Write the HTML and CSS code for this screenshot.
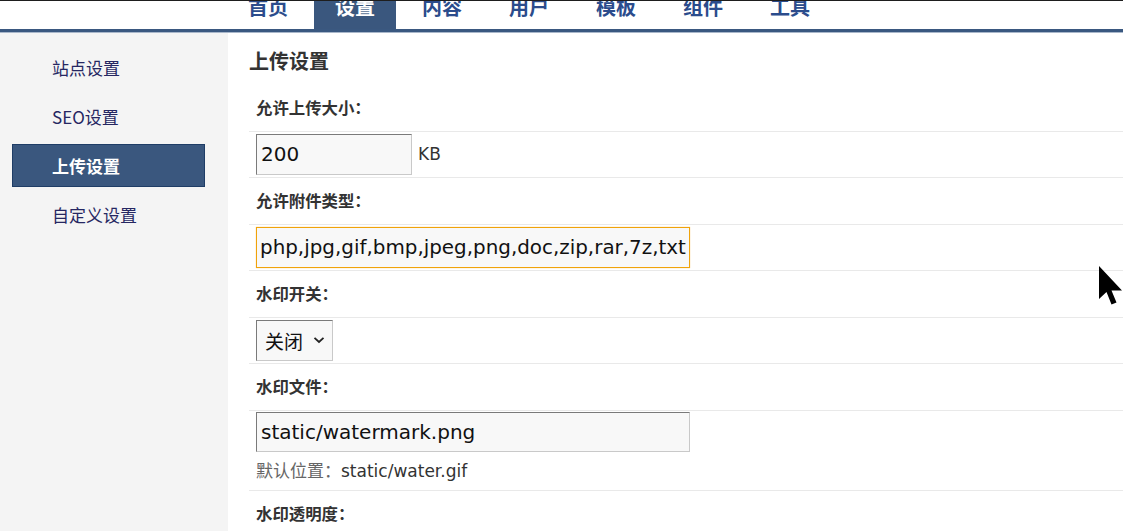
FILE: index.html
```html
<!DOCTYPE html>
<html lang="zh-CN">
<head>
<meta charset="utf-8">
<title>上传设置</title>
<link rel="stylesheet" href="styles.css">
</head>
<body>
<header class="topnav">
  <nav class="tabs">
    <a class="tab">首页</a>
    <a class="tab active">设置</a>
    <a class="tab">内容</a>
    <a class="tab">用户</a>
    <a class="tab">模板</a>
    <a class="tab">组件</a>
    <a class="tab">工具</a>
  </nav>
</header>
<div class="layout">
  <aside class="sidebar">
    <a class="side-item">站点设置</a>
    <a class="side-item">SEO设置</a>
    <a class="side-item active">上传设置</a>
    <a class="side-item">自定义设置</a>
  </aside>
  <main class="content">
    <h2 class="title">上传设置</h2>
    <div class="row label-row">允许上传大小：</div>
    <div class="row field-row">
      <input class="input small" type="text" value="200">
      <span class="unit">KB</span>
    </div>
    <div class="row label-row">允许附件类型：</div>
    <div class="row field-row">
      <input class="input wide focused" type="text" value="php,jpg,gif,bmp,jpeg,png,doc,zip,rar,7z,txt">
    </div>
    <div class="row label-row">水印开关：</div>
    <div class="row field-row">
      <div class="select"><span>关闭</span><svg class="chev" width="12" height="8" viewBox="0 0 12 8"><path d="M1.5 1.8 L6 6 L10.5 1.8" fill="none" stroke="#222" stroke-width="1.8"/></svg></div>
    </div>
    <div class="row label-row">水印文件：</div>
    <div class="row file-row">
      <input class="input wide file" type="text" value="static/watermark.png">
      <div class="help"><span class="help-cn">默认位置：</span>static/water.gif</div>
    </div>
    <div class="row label-row">水印透明度：</div>
  </main>
</div>
<svg class="cursor" width="24" height="44" viewBox="0 0 24 44"><polygon points="0,0 0,33 7.5,26 12.5,38.5 17.5,36.5 12.5,24.5 23,24.5" fill="#000"/></svg>
</body>
</html>
```
FILE: styles.css
```css
html, body {
  margin: 0;
  padding: 0;
}
body {
  position: relative;
  width: 1123px;
  height: 531px;
  overflow: hidden;
  background: #fff;
  font-family: "Noto Sans CJK SC", "Noto Sans", sans-serif;
  color: #333;
}
.topnav {
  border-top: 1px solid #1e1e1e;
  height: 28px;
  overflow: hidden;
  border-bottom: 3px solid #3a5880;
  box-shadow: 0 1px 0 #a9b7ca;
  margin-bottom: 1px;
}
.tabs {
  display: flex;
  gap: 5px;
  padding-left: 227px;
  height: 28px;
}
.tab {
  width: 82px;
  height: 28px;
  line-height: 12px;
  text-align: center;
  font-size: 20px;
  font-weight: bold;
  color: #2b4c8c;
}
.tab.active {
  background: #3a577e;
  color: #fff;
}
.layout {
  display: flex;
  height: 498px;
}
.sidebar {
  width: 228px;
  flex: none;
  background: #f4f4f4;
  padding: 13px 0 0 12px;
  box-sizing: border-box;
  display: flex;
  flex-direction: column;
  gap: 6px;
}
.side-item {
  width: 193px;
  height: 43px;
  box-sizing: border-box;
  border: 1px solid transparent;
  padding-left: 39px;
  line-height: 41px;
  font-size: 17px;
  color: #262762;
}
.side-item.active {
  background: #3a577e;
  border-color: #1f3d66;
  color: #fff;
  font-weight: bold;
}
.content {
  flex: 1;
  padding-left: 21px;
}
.title {
  margin: 0;
  padding-top: 16px;
  height: 36px;
  line-height: 24px;
  font-size: 20px;
  font-weight: bold;
  color: #333;
}
.row {
  border-bottom: 1px solid #e9e9e9;
  padding-left: 7px;
  box-sizing: content-box;
}
.label-row {
  height: 45.5px;
  line-height: 45.5px;
  font-size: 16.4px;
  font-weight: bold;
  color: #333;
}
.field-row {
  height: 45.5px;
  display: flex;
  align-items: center;
  gap: 6px;
}
.input {
  box-sizing: border-box;
  height: 41px;
  padding: 0 4px;
  margin: 0;
  background: #f8f8f8;
  border: 1px solid;
  border-color: #7a7a7a #c9c9c9 #c9c9c9 #7a7a7a;
  border-radius: 0;
  font-family: "DejaVu Sans", sans-serif;
  font-size: 20px;
  color: #111;
  outline: none;
}
.input.small {
  width: 156px;
}
.input.wide {
  width: 434px;
}
.input.focused {
  border-color: #f0a30a;
  box-shadow: 0 0 1px #f5c26b;
  padding: 0 0 0 3px;
  font-size: 19.9px;
}
.input.file {
  height: 40px;
}
.unit {
  font-family: "DejaVu Sans", sans-serif;
  font-size: 17px;
  color: #333;
}
.select {
  box-sizing: border-box;
  width: 77px;
  height: 41px;
  display: flex;
  align-items: center;
  gap: 10px;
  padding-left: 8px;
  background: #f8f8f8;
  border: 1px solid;
  border-color: #7a7a7a #c9c9c9 #c9c9c9 #7a7a7a;
  font-size: 19px;
  color: #111;
}
.file-row {
  height: 72px;
  padding-top: 1px;
  padding-bottom: 6px;
}
.help {
  margin-top: 4px;
  line-height: 28px;
  font-family: "DejaVu Sans", sans-serif;
  font-size: 17px;
  color: #333;
}
.help-cn {
  font-family: "Noto Sans CJK SC", sans-serif;
  color: #666;
}
.cursor {
  position: absolute;
  left: 1099px;
  top: 266px;
}
```
